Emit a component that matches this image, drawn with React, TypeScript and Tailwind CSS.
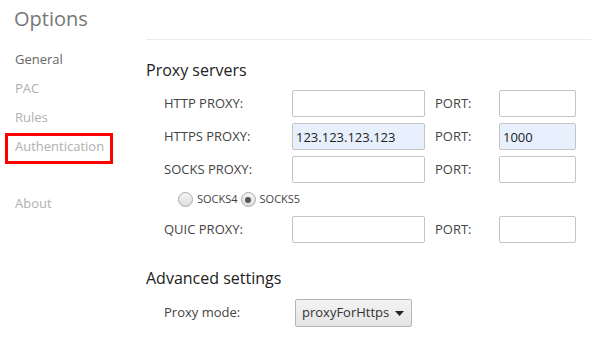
import React from "react";

const font = { fontFamily: '"Open Sans", "Noto Sans", Arial, sans-serif' };

function Row({ label, value, port }: { label: string; value?: string; port?: string }) {
  return (
    <div className="flex items-center h-[27px]">
      <div className="w-[128px] text-[13px] text-[#444]">{label}</div>
      <input
        readOnly
        value={value ?? ""}
        className={`w-[133px] h-[27px] border border-[#c4c4c4] rounded-[2px] px-[3px] text-[13px] text-[#222] outline-none ${value ? "bg-[#e8f0fe]" : "bg-white"}`}
      />
      <div className="w-[74px] pl-[10px] text-[13px] text-[#444]">PORT:</div>
      <input
        readOnly
        value={port ?? ""}
        className={`w-[77px] h-[27px] border border-[#c4c4c4] rounded-[2px] px-[3px] text-[13px] text-[#222] outline-none ${port ? "bg-[#e8f0fe]" : "bg-white"}`}
      />
    </div>
  );
}

function Radio({ checked, label }: { checked?: boolean; label: string }) {
  return (
    <div className="flex items-center">
      <span className="w-[15px] h-[15px] rounded-full border border-[#a9a9a9] bg-gradient-to-b from-[#f4f4f4] to-[#dedede] flex items-center justify-center">
        {checked && <span className="w-[6px] h-[6px] rounded-full bg-[#555]" />}
      </span>
      <span className="ml-[4px] text-[11px] text-[#444]">{label}</span>
    </div>
  );
}

export default function App() {
  return (
    <div className="w-[591px] h-[349px] bg-white flex" style={font}>
      <div className="w-[146px] shrink-0">
        <div className="pl-[14px] pt-[4px] h-[45px] text-[20px] text-[#777]">Options</div>
        <div className="flex flex-col">
          <div className="h-[29px] pl-[15px] flex items-center text-[13px] text-[#666]">General</div>
          <div className="h-[29px] pl-[15px] flex items-center text-[13px] text-[#b0b0b0]">PAC</div>
          <div className="h-[29px] pl-[15px] flex items-center text-[13px] text-[#b0b0b0]">Rules</div>
          <div className="relative h-[29px] pl-[15px] flex items-center text-[13px] text-[#b0b0b0]">
            Authentication
            <span className="absolute left-[5px] top-[1px] w-[108px] h-[31px] border-[3px] border-[#ff0000]" />
          </div>
          <div className="h-[28px]" />
          <div className="h-[29px] pl-[15px] flex items-center text-[13px] text-[#b0b0b0]">About</div>
        </div>
      </div>
      <div className="flex-1 mt-[39px] border-t border-[#ececec]">
        <div className="h-[50px] pt-[19px] text-[16px] text-[#222] leading-[22px]">Proxy servers</div>
        <div className="pl-[18px] flex flex-col gap-[6px]">
          <Row label="HTTP PROXY:" />
          <Row label="HTTPS PROXY:" value="123.123.123.123" port="1000" />
          <Row label="SOCKS PROXY:" />
        </div>
        <div className="pl-[32px] h-[33px] flex items-center gap-[3px]">
          <Radio label="SOCKS4" />
          <Radio checked label="SOCKS5" />
        </div>
        <div className="pl-[18px]">
          <Row label="QUIC PROXY:" />
        </div>
        <div className="pt-[24px] h-[56px] text-[16px] text-[#222] leading-[22px]">Advanced settings</div>
        <div className="pl-[18px] flex items-center">
          <div className="w-[131px] text-[13px] text-[#444]">Proxy mode:</div>
          <div className="w-[117px] h-[28px] border border-[#b5b5b5] rounded-[2px] bg-gradient-to-b from-[#f3f3f3] to-[#e4e4e4] flex items-center pl-[6px] text-[13px] text-[#333]">
            proxyForHttps
            <svg className="ml-auto mr-[7px]" width="9" height="5" viewBox="0 0 9 5">
              <path d="M0 0 H9 L4.5 5 Z" fill="#222" />
            </svg>
          </div>
        </div>
      </div>
    </div>
  );
}
